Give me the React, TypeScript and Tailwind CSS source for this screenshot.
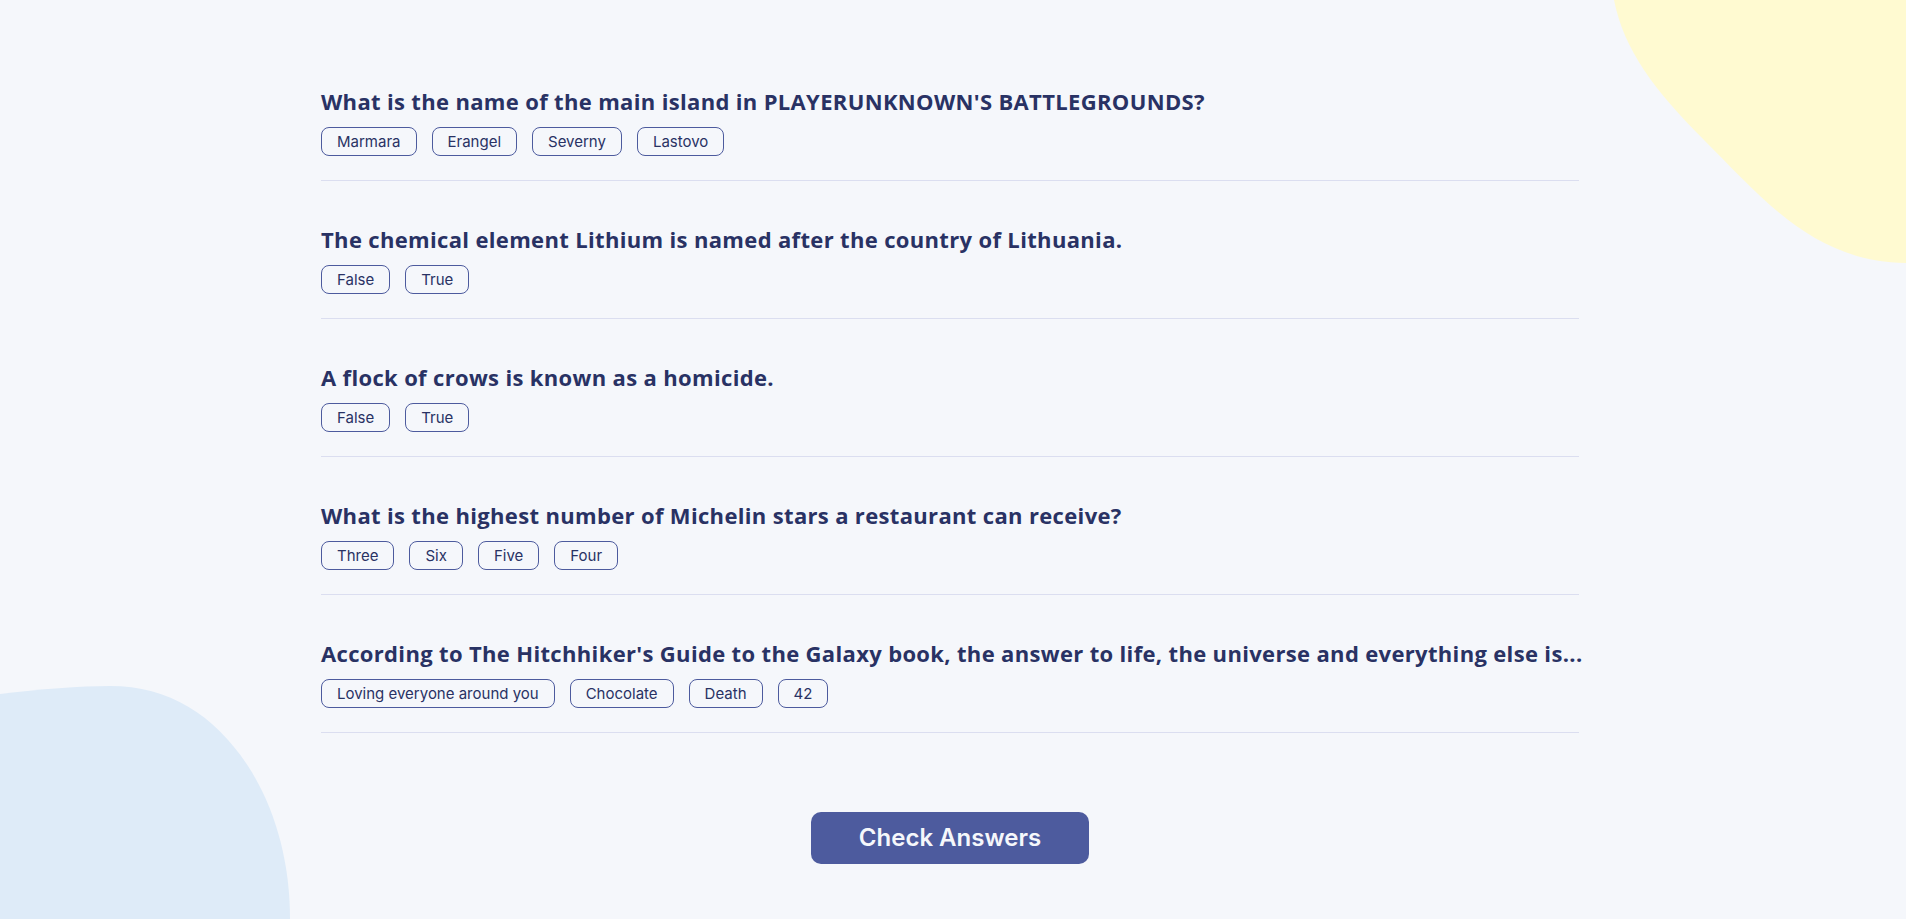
import React, { useState } from 'react';

interface Question {
  question: string;
  answers: string[];
}

const questions: Question[] = [
  {
    question: "What is the name of the main island in PLAYERUNKNOWN'S BATTLEGROUNDS?",
    answers: ['Marmara', 'Erangel', 'Severny', 'Lastovo'],
  },
  {
    question: 'The chemical element Lithium is named after the country of Lithuania.',
    answers: ['False', 'True'],
  },
  {
    question: 'A flock of crows is known as a homicide.',
    answers: ['False', 'True'],
  },
  {
    question: 'What is the highest number of Michelin stars a restaurant can receive?',
    answers: ['Three', 'Six', 'Five', 'Four'],
  },
  {
    question:
      "According to The Hitchhiker's Guide to the Galaxy book, the answer to life, the universe and everything else is...",
    answers: ['Loving everyone around you', 'Chocolate', 'Death', '42'],
  },
];

export default function App() {
  const [selected, setSelected] = useState<Record<number, string>>({});

  return (
    <div className="relative min-h-screen overflow-hidden bg-[#F5F7FB] font-['Inter',sans-serif] text-[#293264]">
      {/* Decorative blobs */}
      <svg className="absolute right-0 top-0 w-[292px] h-[266px]" viewBox="0 0 292 266" fill="none">
        <path
          d="M0 0 C10 50 40 90 90 140 C150 200 200 262 292 263 L292 0 Z"
          fill="#FFFAD1"
        />
      </svg>
      <svg className="absolute bottom-0 left-0 w-[292px] h-[233px]" viewBox="0 0 292 233" fill="none">
        <path
          d="M0 8 C40 3 80 0 110 0 C170 0 215 30 248 80 C275 122 290 175 290 233 L0 233 Z"
          fill="#DEEBF8"
        />
      </svg>

      <main className="relative mx-auto w-[1264px] pr-[6px] pt-[87px] pb-10">
        {questions.map((q, i) => (
          <div key={i} className="border-b border-[#DBDEF0] pb-6 mb-[44px]">
            <h2 className="whitespace-nowrap font-['Open_Sans',sans-serif] text-[22px] font-bold leading-7 tracking-[0.34px]">
              {q.question}
            </h2>
            <div className="mt-[12px] flex gap-[15px]">
              {q.answers.map((a) => (
                <button
                  key={a}
                  onClick={() => setSelected({ ...selected, [i]: a })}
                  className={
                    selected[i] === a
                      ? 'rounded-lg border border-[#D6DBF5] bg-[#D6DBF5] px-[15px] py-1 text-[15px] leading-[19px]'
                      : 'rounded-lg border border-[#4D5B9E] px-[15px] py-1 text-[15px] leading-[19px]'
                  }
                >
                  {a}
                </button>
              ))}
            </div>
          </div>
        ))}

        <div className="mt-[79px] flex justify-center">
          <button className="h-[52px] w-[278px] rounded-[10px] bg-[#4D5B9E] text-[24px] font-semibold text-[#F5F7FB]">
            Check Answers
          </button>
        </div>
      </main>
    </div>
  );
}
